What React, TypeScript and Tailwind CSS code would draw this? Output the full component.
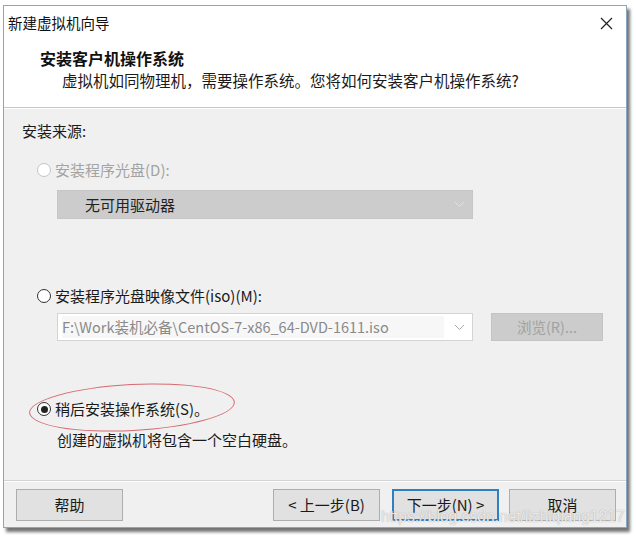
import React from "react";

const FONT = { fontFamily: '"Noto Sans CJK SC", "Noto Sans", sans-serif' };

type RadioProps = {
  checked?: boolean;
  disabled?: boolean;
  label: string;
};

const Radio = ({ checked, disabled, label }: RadioProps) => (
  <div className="flex items-center h-[20px] ml-[15px]">
    <span
      className={`flex items-center justify-center w-[14px] h-[14px] rounded-full border bg-white ${
        disabled ? "border-[#c4c4c4]" : "border-[#333333]"
      }`}
    >
      {checked && <span className="w-[7px] h-[7px] rounded-full bg-[#222222]" />}
    </span>
    <span className={`ml-[4px] ${disabled ? "text-[#a3a3a3]" : "text-[#1a1a1a]"}`}>{label}</span>
  </div>
);

const Chevron = ({ color }: { color: string }) => (
  <svg width="11" height="7" viewBox="0 0 11 7" className="shrink-0">
    <path d="M1 1 L5.5 5.5 L10 1" fill="none" stroke={color} strokeWidth="1" />
  </svg>
);

const Btn = ({ label, primary }: { label: string; primary?: boolean }) => (
  <button
    className={`w-[107px] h-[32px] bg-[#e1e1e1] text-[15px] text-[#1a1a1a] flex items-center justify-center ${
      primary ? "border-2 border-[#2f7fc1]" : "border border-[#adadad]"
    }`}
  >
    {label}
  </button>
);

export default function App() {
  return (
    <div className="w-[636px] h-[538px] bg-white relative overflow-hidden" style={FONT}>
      <div className="absolute left-[3px] top-[5px] w-[624px] h-[523px] border border-[#8aa6c1] bg-white flex flex-col shadow-[3px_4px_3px_rgba(0,0,0,0.55)]">
        {/* title bar */}
        <div className="h-[34px] flex items-center justify-between pl-[4px] pr-[13px]">
          <span className="text-[14.5px] text-[#111111] leading-none">新建虚拟机向导</span>
          <svg width="13" height="13" viewBox="0 0 13 13">
            <path d="M1 1 L12 12 M12 1 L1 12" stroke="#222222" strokeWidth="1.2" />
          </svg>
        </div>

        {/* header */}
        <div className="h-[67px] pl-[36px] pt-[8px]">
          <div className="text-[16px] font-bold leading-[20px] text-[#111111]">安装客户机操作系统</div>
          <div className="text-[15.5px] leading-[20px] mt-[2px] pl-[22px] text-[#1a1a1a]">
            虚拟机如同物理机，需要操作系统。您将如何安装客户机操作系统?
          </div>
        </div>
        <div className="h-px bg-[#c9c9c9]" />
        <div className="h-px bg-white" />

        {/* body */}
        <div className="flex-1 bg-[#f0f0f0] flex flex-col relative">
          <div className="flex-1 pl-[18px] pt-[12px] text-[15px] text-[#1a1a1a] leading-[20px]">
            <div>安装来源:</div>

            <div className="mt-[19px]">
              <Radio disabled label="安装程序光盘(D):" />
            </div>
            <div className="mt-[10px] ml-[35px] w-[416px] h-[29px] bg-[#cccccc] border border-[#c6c6c6] flex items-center justify-between pl-[27px] pr-[7px]">
              <span className="text-[#222222]">无可用驱动器</span>
              <Chevron color="#e2e2e2" />
            </div>

            <div className="mt-[67px]">
              <Radio label="安装程序光盘映像文件(iso)(M):" />
            </div>
            <div className="mt-[7px] flex items-center">
              <div className="ml-[35px] w-[416px] h-[28px] bg-white border border-[#d4d4d4] flex items-center justify-between pl-[4px] pr-[7px]">
                <span className="h-[22px] w-[382px] bg-[#f7f7f7] flex items-center text-[#8a8a8a] text-[14.5px]">
                  F:\Work装机必备\CentOS-7-x86_64-DVD-1611.iso
                </span>
                <Chevron color="#a8a8a8" />
              </div>
              <div className="ml-[18px] w-[112px] h-[28px] bg-[#cccccc] border border-[#c4c4c4] flex items-center justify-center text-[#a2a2a2] text-[14.5px]">
                浏览(R)...
              </div>
            </div>

            <div className="mt-[58px]">
              <Radio checked label="稍后安装操作系统(S)。" />
            </div>
            <div className="mt-[11px] ml-[35px]">创建的虚拟机将包含一个空白硬盘。</div>
          </div>

          {/* red annotation ellipse */}
          <div className="absolute left-[25px] top-[275px] w-[206px] h-[47px] rounded-[50%] border-[1.5px] border-[#d66a70] -rotate-[3deg]" />

          <div className="h-px bg-[#d3d3d3]" />
          <div className="h-px bg-white" />
          <div className="h-[45px] flex items-start pt-[7px] pl-[12px] pr-[10px]">
            <Btn label="帮助" />
            <div className="flex-1" />
            <Btn label="< 上一步(B)" />
            <div className="w-[12px]" />
            <Btn primary label="下一步(N) >" />
            <div className="w-[10px]" />
            <Btn label="取消" />
          </div>
        </div>
      </div>

      {/* watermark */}
      <div
        className="absolute left-[381px] top-[507px] text-[15.6px] leading-[20px] whitespace-nowrap text-white/80 [text-shadow:0_0_1px_#8c8c8c]"
        style={{ fontFamily: '"Liberation Sans", Arial, sans-serif' }}
      >
        https://blog.csdn.net/lizhiqiang1217
      </div>
    </div>
  );
}
